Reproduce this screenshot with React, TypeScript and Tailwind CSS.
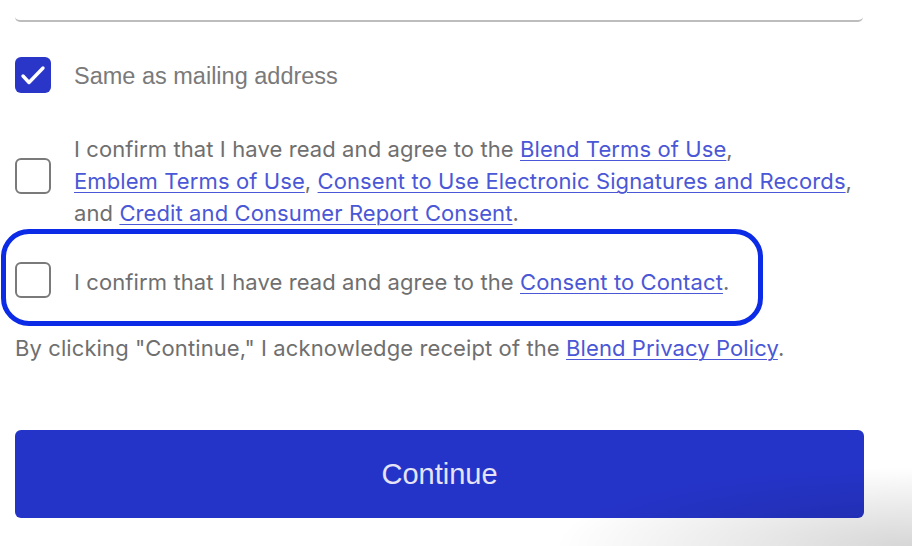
import React, { useState } from 'react';

const font = { fontFamily: 'Inter, "Noto Sans", sans-serif' };

const Box: React.FC<{ checked: boolean; onToggle: () => void }> = ({ checked, onToggle }) => (
  <button
    type="button"
    onClick={onToggle}
    className={
      checked
        ? 'w-[36px] h-[36px] shrink-0 rounded-[6px] bg-[#2a36c8] flex items-center justify-center'
        : 'w-[36px] h-[36px] shrink-0 rounded-[6px] border-2 border-[#7a7a7a] bg-white'
    }
  >
    {checked && (
      <svg width="36" height="36" viewBox="0 0 36 36" fill="none">
        <path d="M8 19 L14 25.5 L28 11" stroke="white" strokeWidth="3.4" strokeLinecap="round" strokeLinejoin="round" />
      </svg>
    )}
  </button>
);

const A: React.FC<{ children: React.ReactNode }> = ({ children }) => (
  <a href="#" className="text-[#4a57d6] underline underline-offset-[3px] decoration-1">
    {children}
  </a>
);

export default function App() {
  const [same, setSame] = useState(true);
  const [terms, setTerms] = useState(false);
  const [contact, setContact] = useState(false);

  return (
    <div className="relative w-[912px] h-[546px] bg-white overflow-hidden" style={font}>
      {/* bottom edge of the address input above */}
      <div className="ml-[15px] w-[848px] h-[22px] border-b-2 border-[#bdbdbd] rounded-b-[5px]" />

      <div className="mt-[33px] ml-[15px] flex items-center gap-[23px]">
        <Box checked={same} onToggle={() => setSame(!same)} />
        <span className="text-[23.5px] text-[#7a7a7a] pt-[4px]" style={{ fontFamily: '"Liberation Sans", Arial, sans-serif' }}>
          Same as mailing address
        </span>
      </div>

      <div className="mt-[39px] ml-[15px] flex items-start gap-[23px]">
        <div className="mt-[25px]">
          <Box checked={terms} onToggle={() => setTerms(!terms)} />
        </div>
        <p className="text-[22px] leading-[32px] text-[#6f6f6f] tracking-[0.1px]">
          I confirm that I have read and agree to the <A>Blend Terms of Use</A>,
          <br />
          <A>Emblem Terms of Use</A>, <A>Consent to Use Electronic Signatures and Records</A>,
          <br />
          and <A>Credit and Consumer Report Consent</A>.
        </p>
      </div>

      <div className="ml-[1px] w-[762px] h-[97px] border-[5px] border-[#0b2be6] rounded-[28px] flex items-center gap-[23px] pl-[9px] pt-[5px]">
        <Box checked={contact} onToggle={() => setContact(!contact)} />
        <p className="text-[22px] leading-[32px] text-[#6f6f6f] pt-[4px] tracking-[0.1px]">
          I confirm that I have read and agree to the <A>Consent to Contact</A>.
        </p>
      </div>

      <p className="mt-[6px] ml-[15px] text-[22px] leading-[32px] text-[#6f6f6f] tracking-[0.1px]">
        By clicking "Continue," I acknowledge receipt of the <A>Blend Privacy Policy</A>.
      </p>

      <button
        type="button"
        className="mt-[66px] ml-[15px] w-[849px] h-[88px] rounded-[6px] bg-[#2534c8] text-[#e4e4f6] text-[29px] flex items-center justify-center"
        style={{ fontFamily: '"Liberation Sans", Arial, sans-serif' }}
      >
        Continue
      </button>

      <div className="pointer-events-none absolute right-0 bottom-0 w-[360px] h-[80px] bg-[radial-gradient(ellipse_at_100%_100%,rgba(0,0,0,0.16),rgba(0,0,0,0)_70%)]" />
    </div>
  );
}
